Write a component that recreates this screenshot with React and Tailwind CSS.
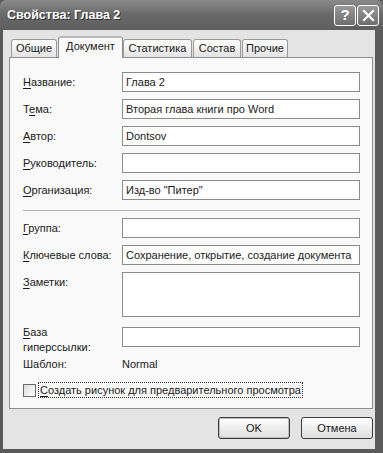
import React from 'react';

const font = { fontFamily: '"Liberation Sans", Arial, sans-serif' };

function Label({ u, rest, pre = '' }) {
  return (
    <span>
      {pre}
      <span className="underline underline-offset-2">{u}</span>
      {rest}
    </span>
  );
}

function Field({ label, value, h = 'h-[20px]' }) {
  return (
    <div className="flex items-start">
      <div className="w-[99px] shrink-0 pt-[4px] leading-[13px]">{label}</div>
      <div className={`w-[238px] ${h} bg-white border border-[#8c8c8c] px-[3px] pt-[3px] leading-[13px] whitespace-nowrap overflow-hidden`}>
        {value}
      </div>
    </div>
  );
}

function Tab({ children, active, w }) {
  if (active) {
    return (
      <div
        className={`${w} h-[22px] -mb-px relative z-10 bg-[#f9f9f9] border border-b-0 border-[#8e8e8e] rounded-t-[3px] border-t-2 border-t-[#b9b9b9] flex justify-center pt-[2px] leading-[13px]`}
      >
        {children}
      </div>
    );
  }
  return (
    <div
      className={`${w} h-[18px] mr-px bg-gradient-to-b from-white to-[#e3e3e3] border border-b-0 border-[#9a9a9a] rounded-t-[3px] flex justify-center pt-[2px] leading-[13px]`}
    >
      {children}
    </div>
  );
}

export default function App() {
  return (
    <div
      style={font}
      className="w-[383px] h-[453px] bg-[#5a5a5a] flex flex-col text-[11px] text-[#1a1a1a]"
    >
      <div className="h-[30px] shrink-0 flex items-center pl-[7px] pr-[4px] bg-gradient-to-b from-[#8a8a8a] via-[#686868] to-[#5e5e5e] rounded-t-[6px]">
        <div className="flex-1 text-white font-bold text-[12.5px] [text-shadow:1px_1px_0_#333] pt-[1px]">
          Свойства: Глава 2
        </div>
        <div className="flex gap-[1px]">
          <div className="w-[22px] h-[21px] rounded-[3px] border border-white bg-gradient-to-b from-[#9a9a9a] to-[#6e6e6e] flex items-center justify-center text-white font-bold text-[15px]">
            ?
          </div>
          <div className="w-[22px] h-[21px] rounded-[3px] border border-white bg-gradient-to-b from-[#9a9a9a] to-[#6e6e6e] flex items-center justify-center">
            <svg width="13" height="13" viewBox="0 0 13 13">
              <path d="M2 2 L11 11 M11 2 L2 11" stroke="white" strokeWidth="2.2" strokeLinecap="square" />
            </svg>
          </div>
        </div>
      </div>

      <div className="flex flex-1 ml-[3px] mr-[8px] mb-[4px] bg-[#e4e4e4] flex-col px-[6px] pr-[2px]">
        <div className="flex items-end h-[27px] pl-[2px]">
          <Tab w="w-[46px]">Общие</Tab>
          <Tab w="w-[65px]" active>Документ</Tab>
          <Tab w="w-[69px]">Статистика</Tab>
          <Tab w="w-[48px]">Состав</Tab>
          <Tab w="w-[46px]">Прочие</Tab>
        </div>

        <div className="h-[352px] bg-[#f9f9f9] border border-[#8e8e8e] flex flex-col pl-[13px] pt-[14px]">
          <div className="flex flex-col gap-[7px]">
            <Field label={<Label u="Н" rest="азвание:" />} value="Глава 2" />
            <Field label={<Label pre="Т" u="е" rest="ма:" />} value="Вторая глава книги про Word" />
            <Field label={<Label u="А" rest="втор:" />} value="Dontsov" />
            <Field label={<Label u="Р" rest="уководитель:" />} value="" />
            <Field label={<Label u="О" rest="рганизация:" />} value={'Изд-во "Питер"'} />
          </div>

          <div className="w-[337px] h-px shrink-0 bg-[#b0b0b0] mt-[10px] mb-[7px]" />

          <div className="flex flex-col gap-[7px]">
            <Field label={<Label u="Г" rest="руппа:" />} value="" />
            <Field
              label={<Label u="К" rest="лючевые слова:" />}
              value="Сохранение, открытие, создание документа"
            />
            <Field label={<Label u="З" rest="аметки:" />} value="" h="h-[45px]" />
          </div>

          <div className="flex items-start mt-[10px]">
            <div className="w-[99px] shrink-0 leading-[15px] -mt-[2px]">
              <Label u="Б" rest="аза" />
              <br />
              гиперссылки:
            </div>
            <div className="w-[238px] h-[20px] bg-white border border-[#8c8c8c]" />
          </div>

          <div className="flex mt-[3px] leading-[13px]">
            <div className="w-[99px]">Шаблон:</div>
            <div>Normal</div>
          </div>

          <div className="flex items-center mt-[11px]">
            <div className="w-[13px] h-[13px] border border-[#6a6a6a] bg-gradient-to-br from-[#dcdcdc] to-white" />
            <div className="ml-[2px] px-[1px] border border-dotted border-[#333] leading-[14px]">
              <Label u="С" rest="оздать рисунок для предварительного просмотра" />
            </div>
          </div>
        </div>

        <div className="flex justify-end gap-[11px] mt-[8px] pr-0">
          <div className="w-[72px] h-[22px] rounded-[3px] border border-[#3c3c3c] bg-gradient-to-b from-white to-[#dedede] shadow-[inset_0_0_0_1px_#bdbdbd] flex items-center justify-center">
            OK
          </div>
          <div className="w-[72px] h-[22px] rounded-[3px] border border-[#3c3c3c] bg-gradient-to-b from-white to-[#dedede] flex items-center justify-center">
            Отмена
          </div>
        </div>
      </div>
    </div>
  );
}
